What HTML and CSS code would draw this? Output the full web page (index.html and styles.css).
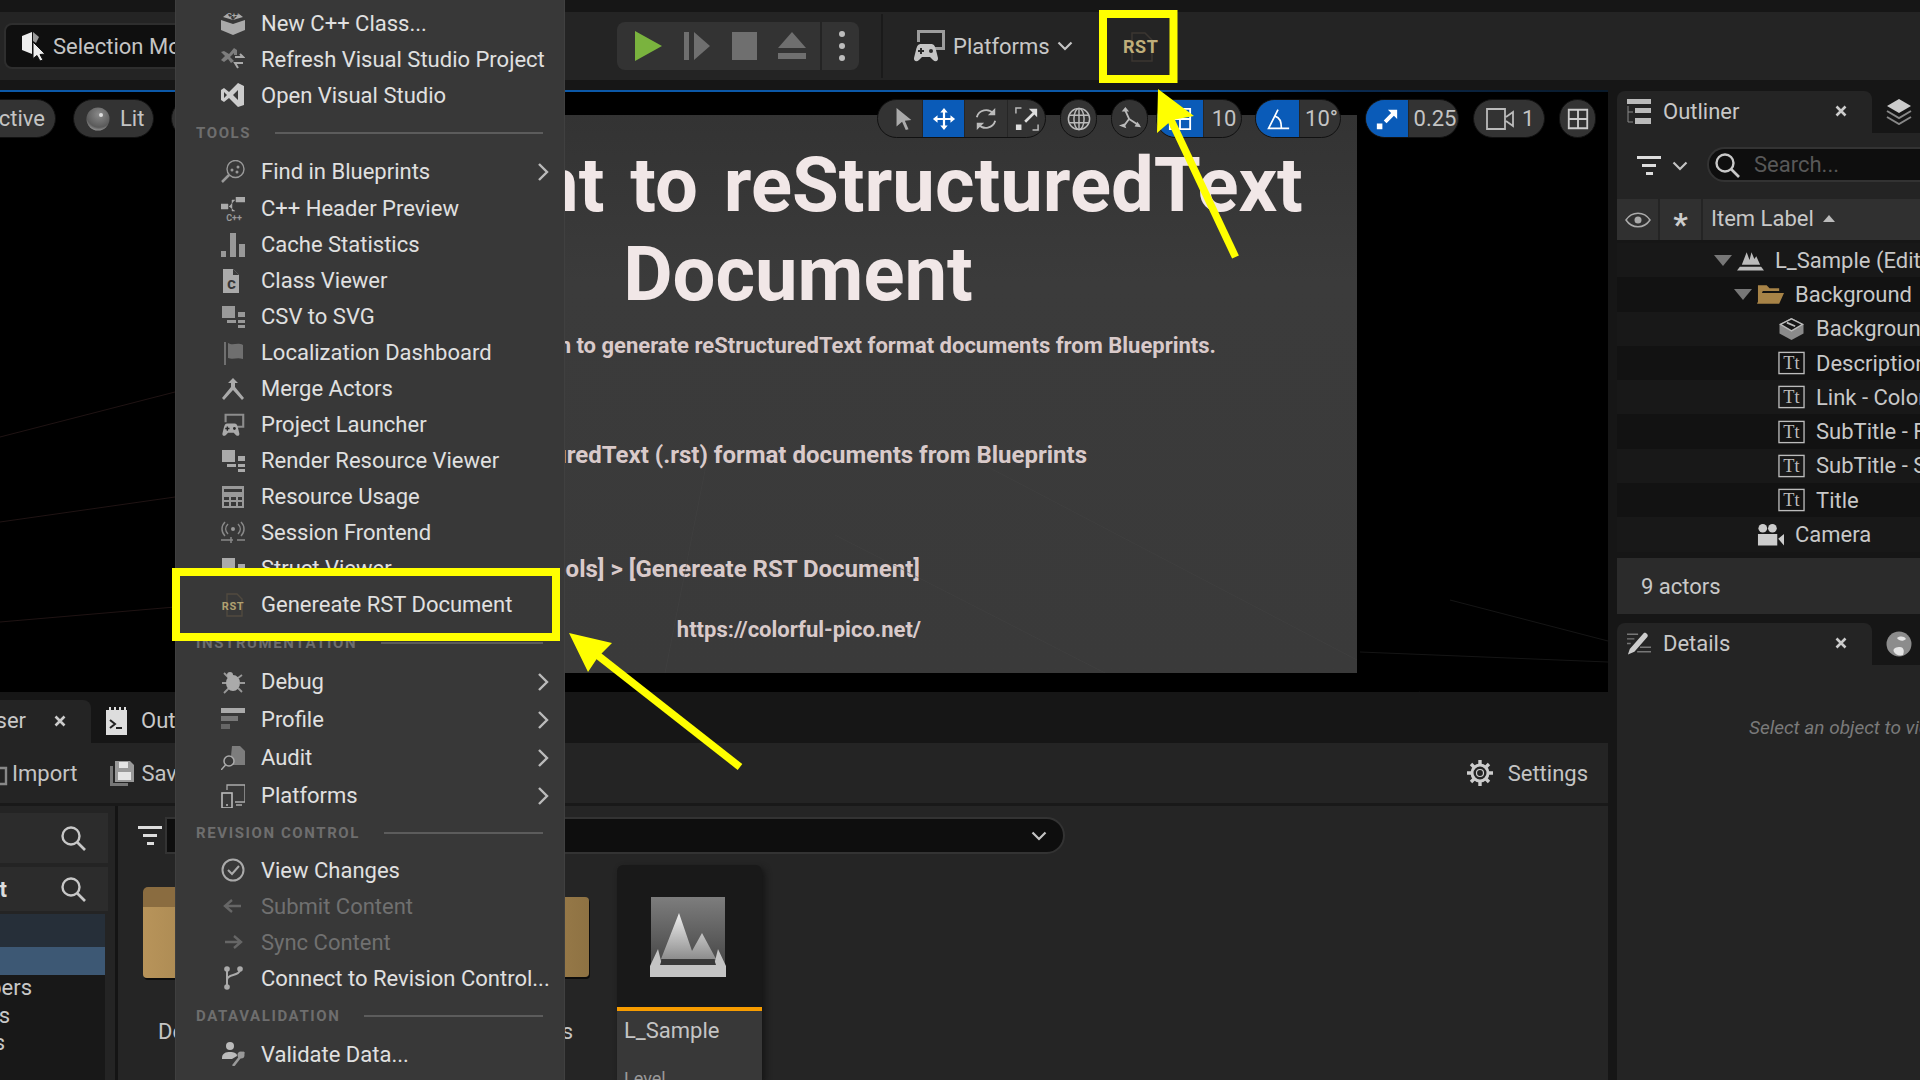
FILE: index.html
```html
<!DOCTYPE html>
<html lang="en">

<head>
    <meta charset="UTF-8">
    <title>Unreal Editor - Tools menu</title>
    <link rel="stylesheet" href="styles.css">
</head>

<body>

    <svg class="defs" width="0" height="0">
        <symbol id="i-search" viewBox="0 0 26 26"><circle cx="11" cy="11" r="8.5" fill="none" stroke="currentColor" stroke-width="2.4"/><path d="M17 17l8 8" stroke="currentColor" stroke-width="2.6"/></symbol>
        <symbol id="i-filter" viewBox="0 0 24 22"><path d="M0 1h24v3H0zM5 9h14v3H5zM9 17h7v3H9z" fill="currentColor"/></symbol>
        <symbol id="i-chev" viewBox="0 0 16 10"><path d="M1.5 1.5L8 8l6.5-6.5" fill="none" stroke="currentColor" stroke-width="2.2"/></symbol>
        <symbol id="i-close" viewBox="0 0 12 12"><path d="M1.5 1.5l9 9M10.500 1.5l-9 9" stroke="currentColor" stroke-width="2.6"/></symbol>
        <symbol id="i-right" viewBox="0 0 12 20"><path d="M2 2l8 8-8 8" fill="none" stroke="currentColor" stroke-width="2.4"/></symbol>
        <symbol id="i-squares" viewBox="0 0 24 24"><path d="M1 1h13v12H1zM17 7h7v5h-7zM17 15h7v3h-7zM17 20h7v3h-7zM6 15h9v3H6z" fill="currentColor"/></symbol>
        <symbol id="i-gamepad" viewBox="0 0 34 34"><path d="M5 1h28v20H15v-3h15V4H8v9H5z" fill="currentColor" opacity=".75"/><path d="M9 15h10c3 0 4 2 5 6l2 8c.5 3-2.500 4.500-5 2l-3-3H10l-3 3c-2.500 2.500-5.500 1-5-2l2-8c1-4 2-6 5-6z" fill="currentColor"/><path d="M6 21h6v2H6zM8 19h2v6H8z" fill="#2a2a2a"/><circle cx="19" cy="22" r="2" fill="#2a2a2a"/></symbol>
        <symbol id="i-tt" viewBox="0 0 28 24"><rect x="1" y="1" width="26" height="22" fill="none" stroke="currentColor" stroke-width="1.400"/><text x="14" y="18.500" font-family="Liberation Serif, serif" font-size="19" fill="currentColor" text-anchor="middle">Tt</text></symbol>
    </svg>

    <div class="page">

        <div class="top-strip"></div>

        <header class="toolbar">
            <div class="mode-pill">
                <svg class="mode-icon" viewBox="0 0 26 30"><path d="M12 1L2 5v14l10 4z" fill="#eee"/><path d="M13 1l6 5-3 6-3-2z" fill="#999"/><path d="M13 11l12 12-5 .5 3 5.500-3 1-3-5.500-4 3z" fill="#eee" stroke="#111"/></svg>
                <span>Selection Mode</span>
            </div>
            <div class="play-group">
                <svg class="play" viewBox="0 0 28 30"><path d="M1 0l27 15L1 30z" fill="#7ab33e"/></svg>
                <svg class="step" viewBox="0 0 26 28"><path d="M0 0h5v28H0zM10 0l16 14-16 14z" fill="#6f6f6f"/></svg>
                <div class="stop"></div>
                <svg class="eject" viewBox="0 0 28 28"><path d="M14 0l14 16H0zM0 21h28v6H0z" fill="#6f6f6f"/></svg>
                <div class="group-sep"></div>
                <div class="kebab"><i></i><i></i><i></i></div>
            </div>
            <div class="tool-sep"></div>
            <div class="platforms">
                <svg class="platforms-icon"><use href="#i-gamepad"/></svg>
                <span>Platforms</span>
                <svg class="chev"><use href="#i-chev"/></svg>
            </div>
            <div class="rst-box">
                <svg class="rst-doc" viewBox="0 0 22 30"><path d="M1 1h13l7 7v21H1z" fill="none" stroke="#3b3631" stroke-width="1.500"/></svg>
                <span>RST</span>
            </div>
        </header>

        <div class="top-band"></div>

        <div class="workspace">

            <div class="left-col">
                <div class="blue-line"></div>

                <section class="viewport">
                    <svg class="vp-lines" viewBox="0 0 1608 600">
                        <path d="M0 345L175 300M0 430L175 405M0 530L175 515" stroke="#1f1313" fill="none"/>
                        <path d="M1450 508L1608 549M1360 625L1420 600M1360 560L1608 570" stroke="#151515" fill="none"/>
                    </svg>

                    <div class="preview">
                        <div class="preview-title"><span class="wide">Blueprint to reStructuredText</span><br>Document</div>
                        <p class="preview-line one"><span>This is a plugin to generate reStructuredText format documents from Blueprints.</span></p>
                        <p class="preview-line two"><span>Generates reStructuredText (.rst) format documents from Blueprints</span></p>
                        <p class="preview-line three"><span>Run [Tools] &gt; [Genereate RST Document]</span></p>
                        <p class="preview-line four"><span>https://colorful-pico.net/</span></p>
                        <svg class="preview-lines" viewBox="0 0 792 558">
                            <path d="M100 558L145 330M400 340L792 545M270 420L540 558M140 558L0 610" stroke="#444" fill="none"/>
                        </svg>
                    </div>

                    <div class="vp-bar">
                        <div class="pill persp"><span>Perspective</span></div>
                        <div class="pill lit">
                            <svg class="lit-ball" viewBox="0 0 24 24"><defs><radialGradient id="ball" cx=".55" cy=".3" r=".8"><stop offset="0" stop-color="#8a8a8a"/><stop offset=".7" stop-color="#5a5a5a"/><stop offset="1" stop-color="#b5b5b5"/></radialGradient></defs><circle cx="12" cy="12" r="11.500" fill="url(#ball)"/><circle cx="15" cy="8" r="2" fill="#ddd"/></svg>
                            <span>Lit</span>
                        </div>
                        <div class="pill show"></div>

                        <div class="vp-right">
                            <div class="pill seg-pill transforms">
                                <div class="seg pick"><svg viewBox="0 0 24 26" class="seg-icon"><path d="M5 1l16 13-7 1 4 9-3 1-4-9-6 5z" fill="#aaa"/></svg></div>
                                <div class="seg on move"><svg viewBox="0 0 26 26" class="seg-icon"><path d="M13 1l4 5h-2.800v5.800H20V9l5 4-5 4v-2.800h-5.800V20H17l-4 5-4-5h2.800v-5.800H6V17l-5-4 5-4v2.800h5.800V6H9z" fill="#fff"/></svg></div>
                                <div class="seg turn"><svg viewBox="0 0 26 26" class="seg-icon"><path d="M3 11A10.500 10.500 0 0 1 21 7M23 15A10.500 10.500 0 0 1 5 19" fill="none" stroke="#bbb" stroke-width="2"/><path d="M23 1v8h-8zM3 25v-8h8z" fill="#bbb"/></svg></div>
                                <div class="seg size"><svg viewBox="0 0 26 26" class="seg-icon"><path d="M1 7V1h6M19 25h6v-6" fill="none" stroke="#bbb" stroke-width="1.600"/><path d="M1 19h6v6H1zM15 2h9v9l-3-3-9 9-2-2 9-9z" fill="#ddd"/></svg></div>
                            </div>
                            <div class="pill round world"><svg viewBox="0 0 26 26" class="seg-icon"><g fill="none" stroke="#bbb" stroke-width="1.600"><circle cx="13" cy="13" r="11.500"/><ellipse cx="13" cy="13" rx="5.500" ry="11.500"/><path d="M13 1.500v23M2 9h22M2 17h22"/></g></svg></div>
                            <div class="pill round surface"><svg viewBox="0 0 26 26" class="seg-icon"><path d="M8 4l4 9-6 8M12 13l11 7" fill="none" stroke="#bbb" stroke-width="2"/><path d="M8 0l4 5H4zM1 20l6-2 2 5zM25 22l-7-1 3-5z" fill="#bbb"/></svg></div>
                            <div class="pill seg-pill grid-snap">
                                <div class="seg on"><svg viewBox="0 0 26 26" class="seg-icon"><path d="M2 2h22v22H2zM13 2v22M2 13h22" fill="none" stroke="#fff" stroke-width="2"/></svg></div>
                                <div class="seg num">10</div>
                            </div>
                            <div class="pill seg-pill angle-snap">
                                <div class="seg on"><svg viewBox="0 0 28 26" class="seg-icon"><path d="M14 2L3 24h24M11 10c4 1 7 6 7 14" fill="none" stroke="#fff" stroke-width="2"/></svg></div>
                                <div class="seg num">10°</div>
                            </div>
                            <div class="pill seg-pill scale-snap">
                                <div class="seg on"><svg viewBox="0 0 26 26" class="seg-icon"><path d="M2 18h6v6H2zM14 3h10v10l-3.500-3.500-8 8-3-3 8-8z" fill="#fff"/></svg></div>
                                <div class="seg num">0.25</div>
                            </div>
                            <div class="pill camera"><svg viewBox="0 0 30 24" class="cam-icon"><path d="M2 2h18v20H2zM21 10l7-5v14l-7-5" fill="none" stroke="#bbb" stroke-width="1.800"/></svg><span>1</span></div>
                            <div class="pill round layout"><svg viewBox="0 0 26 26" class="seg-icon"><path d="M3 3h20v20H3zM13 3v20M3 13h20" fill="none" stroke="#ccc" stroke-width="2"/></svg></div>
                        </div>
                    </div>
                </section>

                <div class="dock-tabs">
                    <div class="dock-tab">
                        <span class="dock-name">Content Browser</span>
                        <svg class="close"><use href="#i-close"/></svg>
                    </div>
                    <div class="dock-tab-off">
                        <svg class="log-icon" viewBox="0 0 21 28"><path d="M0 3h3V0h2v3h3V0h2v3h3V0h2v3h3V0h2v3h1v25H0z" fill="#ddd"/><path d="M4 13l5 4-5 4M10 21h6" fill="none" stroke="#222" stroke-width="2"/></svg>
                        <span>Output Log</span>
                    </div>
                </div>

                <div class="browser-bar">
                    <svg class="import-icon" viewBox="0 0 8 26"><path d="M-8 8h14v16H-8" fill="none" stroke="#888" stroke-width="2.400"/></svg>
                    <span class="bar-text">Import</span>
                    <svg class="save-icon" viewBox="0 0 24 25"><path d="M0 5h3v17h15v3H0z" fill="#777"/><path d="M5 0h15l4 4v17H5z" fill="#999"/><path d="M9 1h9v6H9zM8 11h13v8H8z" fill="#e4e4e4"/></svg>
                    <span class="bar-text">Save All</span>
                    <div class="settings">
                        <svg class="gear" viewBox="0 0 26 26"><g fill="none" stroke="#ccc"><circle cx="13" cy="13" r="8" stroke-width="3"/><circle cx="13" cy="13" r="3.500" stroke-width="1.200"/><path d="M13 0v5M13 21v5M0 13h5M21 13h5M4 4l3.500 3.500M18.500 18.500L22 22M22 4l-3.500 3.500M7.500 18.500L4 22" stroke-width="3.400"/></g></svg>
                        <span class="bar-text">Settings</span>
                    </div>
                </div>

                <div class="browser-body">
                    <aside class="sources">
                        <div class="source-search first"><svg class="mag"><use href="#i-search"/></svg></div>
                        <div class="source-search second"><span>Content</span><svg class="mag"><use href="#i-search"/></svg></div>
                        <div class="src-row dim"></div>
                        <div class="src-row sel"></div>
                        <div class="src-name devs">Developers</div>
                        <div class="src-name maps">Maps</div>
                        <div class="src-name mats">Materials</div>
                    </aside>
                    <div class="assets">
                        <div class="path-row">
                            <svg class="asset-filter"><use href="#i-filter"/></svg>
                            <div class="path-field"><svg class="chev"><use href="#i-chev"/></svg></div>
                        </div>
                        <div class="asset-row">
                            <div class="folder first-folder"><div class="folder-tab"></div><div class="folder-body"></div><span>Developers</span></div>
                            <div class="folder second-folder"><div class="folder-body"></div><span>Maps</span></div>
                            <div class="level-card">
                                <div class="level-thumb">
                                    <svg viewBox="0 0 76 80" class="level-icon">
                                        <defs>
                                            <linearGradient id="sky" x1="0" y1="0" x2="0" y2="1"><stop offset="0" stop-color="#7d7d7d"/><stop offset="1" stop-color="#3d3d3d"/></linearGradient>
                                            <linearGradient id="hill" x1="0" y1="0" x2="0" y2="1"><stop offset="0" stop-color="#f0f0f0"/><stop offset="1" stop-color="#8d8d8d"/></linearGradient>
                                        </defs>
                                        <path d="M1 0h74v80H1z" fill="url(#sky)"/>
                                        <path d="M11 62L29 16 42 54l10-18 14 26z" fill="url(#hill)"/>
                                        <path d="M0 69l8-17 4 16h52l4-16 8 17v11H0z" fill="#c4c4c4"/>
                                        <path d="M12 62h52l2 6H10z" fill="#3a3a3a"/>
                                    </svg>
                                </div>
                                <div class="level-foot">
                                    <div class="level-name">L_Sample</div>
                                    <div class="level-type">Level</div>
                                </div>
                            </div>
                        </div>
                    </div>
                </div>
            </div>

            <aside class="right-col">
                <div class="panel-tabs">
                    <div class="panel-tab">
                        <svg class="tab-icon" viewBox="0 0 24 25"><path d="M0 0h24v5H0zM8 9h16v5H8zM8 19h16v6H8z" fill="#bbb"/><path d="M1 7v16h5M1 13h5" fill="none" stroke="#888"/></svg>
                        <span>Outliner</span>
                        <svg class="close"><use href="#i-close"/></svg>
                    </div>
                    <svg class="side-icon" viewBox="0 0 26 26"><path d="M13 0l12 7-12 7L1 7z" fill="#ccc"/><path d="M1 12l12 7 12-7M1 18l12 7 12-7" fill="none" stroke="#888" stroke-width="2"/></svg>
                </div>
                <div class="outliner-tools">
                    <svg class="out-filter"><use href="#i-filter"/></svg>
                    <svg class="chev"><use href="#i-chev"/></svg>
                    <div class="out-search">
                        <svg class="mag"><use href="#i-search"/></svg>
                        <span>Search...</span>
                    </div>
                </div>
                <div class="out-head">
                    <div class="head-cell eye"><svg viewBox="0 0 26 16" class="eye-icon"><path d="M1 8c6-9 18-9 24 0-6 9-18 9-24 0z" fill="none" stroke="#aaa" stroke-width="1.500"/><circle cx="13" cy="8" r="3.500" fill="#aaa"/></svg></div>
                    <div class="head-cell star">*</div>
                    <div class="head-cell label"><span>Item Label</span><i class="sort-up"></i></div>
                </div>
                <div class="out-rows">
                    <div class="out-row lvl0"><i class="tri"></i><svg class="row-icon" viewBox="0 0 28 22"><path d="M0 22l3-4h22l3 4zM5 16L10 3l3 8 2-8 3 7 2-3 4 9z" fill="#bbb"/></svg><span>L_Sample (Editor)</span></div>
                    <div class="out-row lvl1"><i class="tri"></i><svg class="row-icon" viewBox="0 0 28 22"><path d="M1 20V2h9l3 3h10v3H6zM5 10h23l-5 11H0z" fill="#a78347"/></svg><span>Background</span></div>
                    <div class="out-row lvl2"><svg class="row-icon" viewBox="0 0 28 26"><path d="M14 1l13 7v10L14 25 1 18V8z" fill="#8a8a8a"/><path d="M14 2l12 6-12 7L2 8z" fill="#161616" stroke="#bbb" stroke-width="1.500"/><path d="M9 6l9 4" stroke="#bbb" stroke-width="2"/></svg><span>Background</span></div>
                    <div class="out-row lvl2"><svg class="row-icon tt"><use href="#i-tt"/></svg><span>Description</span></div>
                    <div class="out-row lvl2"><svg class="row-icon tt"><use href="#i-tt"/></svg><span>Link - Colorful</span></div>
                    <div class="out-row lvl2"><svg class="row-icon tt"><use href="#i-tt"/></svg><span>SubTitle - Feature</span></div>
                    <div class="out-row lvl2"><svg class="row-icon tt"><use href="#i-tt"/></svg><span>SubTitle - Summary</span></div>
                    <div class="out-row lvl2"><svg class="row-icon tt"><use href="#i-tt"/></svg><span>Title</span></div>
                    <div class="out-row lvl1 leaf"><svg class="row-icon" viewBox="0 0 28 24"><circle cx="6" cy="5" r="4.500" fill="#ccc"/><circle cx="16" cy="5" r="4.500" fill="#ccc"/><path d="M1 11h20v12H1zM22 16l6-5v12z" fill="#ccc"/></svg><span>Camera</span></div>
                </div>
                <div class="actors-bar"><span>9 actors</span></div>
                <div class="panel-tabs details-tabs">
                    <div class="panel-tab">
                        <svg class="tab-icon" viewBox="0 0 26 26"><path d="M3 19L18 2c2-2 6 2 4 4L8 22l-7 3z" fill="#ccc"/><path d="M0 3h12M0 8h8M0 13h4M14 17h12M11 22h15" stroke="#777" stroke-width="1.500"/></svg>
                        <span>Details</span>
                        <svg class="close"><use href="#i-close"/></svg>
                    </div>
                    <svg class="side-icon" viewBox="0 0 26 26"><circle cx="13" cy="13" r="12.500" fill="#8c8c8c"/><path d="M8 21c-2-4 3-5 6-5 3 0 5 3 3 8-4 1-7 0-9-3zM11 7c3-2 7-2 9 1-3 3-7 2-9-1z" fill="#e4e4e4"/></svg>
                </div>
                <div class="details-body">
                    <span>Select an object to view details.</span>
                </div>
            </aside>
        </div>

        <nav class="tools-menu">
            <div class="menu-row"><svg class="menu-icon" viewBox="0 0 24 24"><path d="M0 9l12 4 12-4v10l-12 5L0 19zM2 6l4-3 6 6zM22 6l-4-3-6 6z" fill="#aaa"/><text x="12.500" y="6.500" font-family="Roboto" font-size="8" font-weight="700" fill="#aaa" text-anchor="middle">C++</text></svg><span>New C++ Class...</span></div>
            <div class="menu-row"><svg class="menu-icon" viewBox="0 0 24 24"><path d="M0 5l3-1 5 3 5-6 3 2v5h-3V6L9 10l4 4-3 2-3-4-4 3-3-2 4-4z" fill="#7d7d7d"/><path d="M14 10h8l-3-3M22 16h-8l3 5" fill="none" stroke="#aaa" stroke-width="2"/></svg><span>Refresh Visual Studio Project</span></div>
            <div class="menu-row"><svg class="menu-icon" viewBox="0 0 24 24"><path d="M17 0l6 3v19l-6 2-9-9-5 4-3-2V7l3-2 5 4zM17 7l-5 5 5 5zM3 9v6l3-3z" fill="#ccc"/></svg><span>Open Visual Studio</span></div>

            <div class="menu-section"><span>TOOLS</span><i></i></div>
            <div class="menu-row sub first-sub"><svg class="menu-icon" viewBox="0 0 24 24"><circle cx="14.500" cy="9" r="8.500" fill="none" stroke="#999" stroke-width="1.400"/><path d="M8 15l-7 7" stroke="#999" stroke-width="2.500"/><circle cx="11" cy="10" r="1.500" fill="#999"/><circle cx="17" cy="7" r="1.500" fill="#999"/><circle cx="16" cy="12" r="1.500" fill="#999"/></svg><span>Find in Blueprints</span><svg class="menu-more"><use href="#i-right"/></svg></div>
            <div class="menu-row"><svg class="menu-icon" viewBox="0 0 24 24"><path d="M0 7h7v5H0zM15 0h9v5h-9zM8 9.500h3V3h3M8 9.500h3V14h3" fill="#aaa" stroke="#aaa" stroke-width=".5"/><text x="13" y="24" font-family="Roboto" font-size="9" font-weight="700" fill="#999" text-anchor="middle">C++</text></svg><span>C++ Header Preview</span></div>
            <div class="menu-row"><svg class="menu-icon" viewBox="0 0 24 24"><path d="M0 18h5v6H0zM9 0h6v24H9zM18 11h6v13h-6z" fill="#999"/></svg><span>Cache Statistics</span></div>
            <div class="menu-row"><svg class="menu-icon" viewBox="0 0 24 24"><path d="M4 0h8l6 6v18H2V0z" fill="#aaa"/><path d="M12 0v6h6" fill="#383838"/><text x="10.500" y="20" font-family="Roboto" font-size="13" font-weight="900" fill="#383838" text-anchor="middle">C</text></svg><span>Class Viewer</span></div>
            <div class="menu-row"><svg class="menu-icon"><use href="#i-squares" color="#999"/></svg><span>CSV to SVG</span></div>
            <div class="menu-row"><svg class="menu-icon" viewBox="0 0 24 24"><path d="M3 1h2v23H3zM7 2c5 3 9-1 15 2v14c-6-2-10 1-15-1z" fill="#6f6f6f"/></svg><span>Localization Dashboard</span></div>
            <div class="menu-row"><svg class="menu-icon" viewBox="0 0 24 24"><path d="M12 1l5 5h-3v4l9 11-2 2-9-10-9 10-2-2 9-11V6H7z" fill="#aaa"/></svg><span>Merge Actors</span></div>
            <div class="menu-row"><svg class="menu-icon"><use href="#i-gamepad" color="#aaa"/></svg><span>Project Launcher</span></div>
            <div class="menu-row"><svg class="menu-icon"><use href="#i-squares" color="#aaa"/></svg><span>Render Resource Viewer</span></div>
            <div class="menu-row"><svg class="menu-icon" viewBox="0 0 24 24"><path d="M1 1h22v22H1z" fill="#999"/><path d="M3 7h18M3 12h5v3H3zM10 12h5v3h-5zM17 12h4v3h-4zM3 17h5v4H3zM10 17h5v4h-5zM17 17h4v4h-4zM3 4h18v3H3z" fill="#383838"/></svg><span>Resource Usage</span></div>
            <div class="menu-row"><svg class="menu-icon" viewBox="0 0 24 24"><circle cx="12" cy="8" r="2" fill="#999"/><path d="M7 3c-3 3-3 7 0 10M17 3c3 3 3 7 0 10M4 1c-4 4-4 10 0 14M20 1c4 4 4 10 0 14M0 19h12M16 19h8M10 16v6" fill="none" stroke="#888" stroke-width="1.500"/></svg><span>Session Frontend</span></div>
            <div class="menu-row"><svg class="menu-icon"><use href="#i-squares" color="#aaa"/></svg><span>Struct Viewer</span></div>
            <div class="menu-row marked"><svg class="menu-icon" viewBox="0 0 24 24"><path d="M6 1h10l5 5v17H6z" fill="none" stroke="#514a3f" stroke-width="1.400"/><text x="12" y="17" font-family="Roboto" font-size="11" font-weight="700" letter-spacing=".6" fill="#b0a070" text-anchor="middle">RST</text></svg><span>Genereate RST Document</span></div>

            <div class="menu-section"><span>INSTRUMENTATION</span><i></i></div>
            <div class="menu-row sub"><svg class="menu-icon" viewBox="0 0 24 24"><path d="M3 3l5 5M21 5l-4 3M1 13h5M19 13h5M3 23l5-5M21 22l-4-4" stroke="#999" stroke-width="1.800"/><ellipse cx="12" cy="13" rx="7" ry="8" fill="#aaa"/><circle cx="9" cy="5" r="3" fill="#aaa"/></svg><span>Debug</span><svg class="menu-more"><use href="#i-right"/></svg></div>
            <div class="menu-row sub"><svg class="menu-icon" viewBox="0 0 24 24"><path d="M0 0h24v5H0z" fill="#aaa"/><path d="M0 8h17v5H0z" fill="#777"/><path d="M0 16h9v5H0z" fill="#666"/></svg><span>Profile</span><svg class="menu-more"><use href="#i-right"/></svg></div>
            <div class="menu-row sub"><svg class="menu-icon" viewBox="0 0 24 24"><path d="M11 0h8l5 5v14H12l-2-9z" fill="#7d7d7d"/><circle cx="8" cy="15" r="5" fill="#383838" stroke="#aaa" stroke-width="1.500"/><path d="M4.500 19L0 24" stroke="#aaa" stroke-width="1.500"/></svg><span>Audit</span><svg class="menu-more"><use href="#i-right"/></svg></div>
            <div class="menu-row sub"><svg class="menu-icon" viewBox="0 0 24 24"><path d="M6 6V1h18v17H14M15 21h6" fill="none" stroke="#aaa" stroke-width="1.300"/><rect x="1" y="9" width="10" height="15" fill="none" stroke="#bbb" stroke-width="1.600"/><circle cx="6" cy="21" r="1" fill="#bbb"/></svg><span>Platforms</span><svg class="menu-more"><use href="#i-right"/></svg></div>

            <div class="menu-section short"><span>REVISION CONTROL</span><i></i></div>
            <div class="menu-row"><svg class="menu-icon" viewBox="0 0 24 24"><circle cx="12" cy="12" r="10.500" fill="none" stroke="#aaa" stroke-width="2"/><path d="M7 12l4 4 7-8" fill="none" stroke="#aaa" stroke-width="2"/></svg><span>View Changes</span></div>
            <div class="menu-row off"><svg class="menu-icon" viewBox="0 0 24 24"><path d="M20 12H5M11 6l-7 6 7 6" fill="none" stroke="#666" stroke-width="2.400"/></svg><span>Submit Content</span></div>
            <div class="menu-row off"><svg class="menu-icon" viewBox="0 0 24 24"><path d="M4 12h15M13 6l7 6-7 6" fill="none" stroke="#666" stroke-width="2.400"/></svg><span>Sync Content</span></div>
            <div class="menu-row"><svg class="menu-icon" viewBox="0 0 24 24"><circle cx="6" cy="3" r="2.800" fill="#aaa"/><circle cx="19" cy="3" r="2.800" fill="#aaa"/><circle cx="6" cy="21" r="2.800" fill="#aaa"/><path d="M6 3v18M19 3c0 8-13 4-13 11" fill="none" stroke="#aaa" stroke-width="2"/></svg><span>Connect to Revision Control...</span></div>

            <div class="menu-section"><span>DATAVALIDATION</span><i></i></div>
            <div class="menu-row"><svg class="menu-icon" viewBox="0 0 24 24"><circle cx="9" cy="4" r="4" fill="#bbb"/><path d="M1 16c0-5 4-6 8-6s7 1 7 4l-5 3H1z" fill="#bbb"/><path d="M23 10l-11 14" stroke="#999" stroke-width="2.600"/><circle cx="20" cy="13" r="3.500" fill="#999"/></svg><span>Validate Data...</span></div>
        </nav>

        <svg class="marks" viewBox="0 0 1920 1080">
            <rect x="1103" y="14" width="70.500" height="65" fill="none" stroke="#ffff00" stroke-width="8"/>
            <path d="M1158 89L1194 116 1172 120 1157 133z" fill="#ffff00"/>
            <path d="M1170 118L1235.500 257" stroke="#ffff00" stroke-width="7.500"/>
            <path d="M569 633L612 643 598 657 588 672z" fill="#ffff00"/>
            <path d="M596 654L740 767" stroke="#ffff00" stroke-width="7.500"/>
        </svg>
    </div>

</body>

</html>
```

FILE: styles.css
```css
* {
    box-sizing: border-box;
}

html,
body {
    margin: 0;
    height: 100%;
    background-color: #161616;
}

body {
    font-family: Roboto, sans-serif;
    font-size: 22px;
    color: #c8c8c8;
}

.defs {
    position: absolute;
}

svg {
    display: block;
    flex: none;
}

.page {
    position: relative;
    width: 1920px;
    height: 1080px;
    overflow: hidden;
    background-color: #161616;
}

.top-strip {
    height: 12px;
}

/* main toolbar */
.toolbar {
    height: 68px;
    background-color: #242424;
    display: flex;
    align-items: center;
}

.mode-pill {
    width: 300px;
    height: 46px;
    margin-left: 4px;
    padding-left: 14px;
    display: flex;
    align-items: center;
    gap: 7px;
    background-color: #0f0f0f;
    border: 2px solid #2e2e2e;
    border-radius: 8px;
    color: #c4c4c4;
    white-space: nowrap;
}

.mode-icon {
    width: 26px;
    height: 30px;
}

.play-group {
    width: 242px;
    height: 48px;
    margin-left: 313px;
    display: flex;
    align-items: center;
    background-color: #333;
    border-radius: 8px;
}

.play {
    width: 28px;
    height: 30px;
    margin-left: 17px;
}

.step {
    width: 26px;
    height: 28px;
    margin-left: 22px;
}

.stop {
    width: 25px;
    height: 28px;
    margin-left: 22px;
    background-color: #6f6f6f;
}

.eject {
    width: 28px;
    height: 28px;
    margin-left: 21px;
}

.group-sep {
    width: 2px;
    height: 48px;
    margin-left: 14px;
    background-color: #242424;
}

.kebab {
    margin-left: 17px;
    display: flex;
    flex-direction: column;
    gap: 6px;
}

.kebab i {
    display: block;
    width: 6px;
    height: 6px;
    border-radius: 50%;
    background-color: #bdbdbd;
}

.tool-sep {
    width: 2px;
    height: 64px;
    margin-left: 22px;
    background-color: #1a1a1a;
}

.platforms {
    margin-left: 29px;
    display: flex;
    align-items: center;
}

.platforms-icon {
    width: 34px;
    height: 34px;
    color: #c4c4c4;
    margin-right: 7px;
}

.chev {
    width: 16px;
    height: 10px;
    margin-left: 7px;
    color: #c4c4c4;
}

.rst-box {
    position: relative;
    width: 78px;
    height: 46px;
    margin-left: 29px;
    display: flex;
    align-items: center;
    justify-content: center;
    font-size: 18px;
    font-weight: 700;
    letter-spacing: .5px;
    color: #bfae7a;
}

.rst-doc {
    position: absolute;
    left: 29px;
    top: 9px;
    width: 22px;
    height: 30px;
}

.rst-box span {
    position: relative;
}

.top-band {
    height: 10px;
}

/* body under the toolbar */
.workspace {
    display: flex;
    height: 990px;
}

.left-col {
    width: 1608px;
    display: flex;
    flex-direction: column;
}

.blue-line {
    height: 2px;
    background: linear-gradient(to right, #0b58a8 0, #0b58a8 1150px, #0a2a50 1350px, #0a1a2a 1608px);
}

.viewport {
    position: relative;
    height: 600px;
    padding-top: 23px;
    background-color: #000;
}

.vp-lines {
    position: absolute;
    left: 0;
    top: 0;
    width: 1608px;
    height: 600px;
}

.preview {
    position: relative;
    width: 792px;
    height: 558px;
    margin-left: 565px;
    background: linear-gradient(to bottom, #333, #3b3b3b 30%, #3a3a3a);
    overflow: hidden;
    font-weight: 700;
    color: #d9caca;
}

.preview-lines {
    position: absolute;
    left: 0;
    top: 0;
    width: 792px;
    height: 558px;
    opacity: .45;
}

.preview-title {
    width: 1118px;
    margin-left: -326px;
    padding-top: 26px;
    font-size: 76px;
    line-height: 89px;
    text-align: center;
    white-space: nowrap;
    color: #f1e7e7;
}

.preview-title .wide {
    word-spacing: 7px;
}

/* lines run in under the menu, so they are pinned by their right end */
.preview-line {
    margin: 0;
    display: flex;
    justify-content: flex-end;
    white-space: nowrap;
    line-height: 24px;
}

.preview-line.one {
    margin-top: 15px;
    padding-right: 141px;
}

.preview-line.two {
    margin-top: 85px;
    padding-right: 270px;
    font-size: 24px;
}

.preview-line.three {
    margin-top: 90px;
    padding-right: 437px;
    font-size: 24px;
}

.preview-line.four {
    margin-top: 37px;
    padding-right: 436px;
}

.vp-bar {
    position: absolute;
    left: 0;
    right: 0;
    top: 7px;
    height: 39px;
    padding-right: 12px;
    display: flex;
    gap: 17px;
}

.vp-right {
    margin-left: auto;
    display: flex;
}

.pill {
    height: 39px;
    display: flex;
    align-items: center;
    background-color: #333;
    border: 1px solid #111;
    border-radius: 20px;
    color: #c4c4c4;
    overflow: hidden;
    white-space: nowrap;
}

.persp {
    width: 116px;
    margin-left: -60px;
    justify-content: flex-end;
    padding-right: 10px;
}

.lit {
    width: 81px;
    padding-left: 12px;
    gap: 10px;
}

.lit-ball {
    width: 24px;
    height: 24px;
}

.show {
    width: 100px;
}

.seg {
    height: 100%;
    display: flex;
    align-items: center;
    justify-content: center;
    border-left: 1px solid #262626;
}

.seg:first-child {
    border-left: 0;
}

.seg.on {
    background-color: #0a5bb8;
}

.seg-icon {
    width: 24px;
    height: 24px;
}

.transforms {
    width: 169px;
    margin-right: 14px;
}

.seg.pick {
    width: 44px;
    padding-left: 6px;
}

.seg.move {
    width: 42px;
}

.seg.turn {
    width: 43px;
}

.seg.size {
    flex: 1;
}

.round {
    width: 37px;
    justify-content: center;
}

.world {
    margin-right: 14px;
}

.surface {
    margin-right: 8px;
}

.grid-snap {
    width: 86px;
    margin-right: 13px;
}

.grid-snap .seg.on {
    width: 46px;
}

.seg.num {
    flex: 1;
    padding-left: 3px;
}

.angle-snap {
    width: 86px;
    margin-right: 24px;
}

.angle-snap .seg.on {
    width: 43px;
}

.scale-snap {
    width: 94px;
    margin-right: 14px;
}

.scale-snap .seg.on {
    width: 42px;
}

.camera {
    width: 72px;
    padding-left: 11px;
    gap: 7px;
    margin-right: 14px;
}

.cam-icon {
    width: 30px;
    height: 24px;
}

/* content browser */
.dock-tabs {
    height: 51px;
    padding-top: 8px;
    display: flex;
}

.dock-tab {
    width: 91px;
    padding-bottom: 2px;
    background-color: #242424;
    border-radius: 0 8px 0 0;
    display: flex;
    align-items: center;
    justify-content: flex-end;
    padding-right: 25px;
    overflow: hidden;
    white-space: nowrap;
}

.dock-name {
    margin-right: 28px;
}

.close {
    width: 12px;
    height: 12px;
    color: #ccc;
}

.dock-tab-off {
    margin-left: 15px;
    padding-bottom: 2px;
    display: flex;
    align-items: center;
    gap: 14px;
    white-space: nowrap;
}

.log-icon {
    width: 21px;
    height: 28px;
}

.browser-bar {
    height: 63px;
    display: flex;
    align-items: center;
    background-color: #242424;
    border-bottom: 3px solid #191919;
    white-space: nowrap;
}

.import-icon {
    width: 8px;
    height: 26px;
    margin-right: 4px;
}

.bar-text {
    color: #c4c4c4;
}

.save-icon {
    width: 24px;
    height: 25px;
    margin: 0 7px 0 33px;
}

.settings {
    margin-left: auto;
    margin-right: 20px;
    display: flex;
    align-items: center;
    gap: 15px;
}

.gear {
    width: 26px;
    height: 26px;
}

.browser-body {
    flex: 1;
    display: flex;
    min-height: 0;
}

.sources {
    width: 118px;
    padding: 7px 7px 0 0;
    border-right: 3px solid #141414;
    background-color: #242424;
}

.source-search {
    position: relative;
    width: 108px;
    background-color: #2c2c2c;
    display: flex;
    align-items: center;
    justify-content: flex-end;
    padding-right: 22px;
}

.source-search.first {
    height: 50px;
}

.source-search.second {
    height: 44px;
    margin-top: 4px;
}

.source-search span {
    position: absolute;
    right: 101px;
    font-weight: 700;
    color: #ddd;
}

.mag {
    width: 26px;
    height: 26px;
    color: #c8c8c8;
}

.src-row {
    width: 105px;
    margin-top: 0;
}

.src-row.dim {
    height: 33px;
    margin-top: 3px;
    background-color: #262f39;
}

.src-row.sel {
    height: 28px;
    background-color: #3d5874;
}

.src-name {
    width: 105px;
    height: 27.500px;
    line-height: 26px;
    background-color: #181818;
    white-space: nowrap;
    display: flex;
    justify-content: flex-end;
}

.src-name.devs {
    padding-right: 73px;
}

.src-name.maps {
    padding-right: 95px;
}

.src-name.mats {
    height: 120px;
    padding-right: 100px;
}

.assets {
    flex: 1;
    min-width: 0;
    background-color: #252525;
}

.path-row {
    height: 48px;
    padding-top: 11px;
    display: flex;
}

.asset-filter {
    width: 24px;
    height: 22px;
    margin: 8px 0 0 20px;
    color: #ddd;
}

.path-field {
    width: 900px;
    height: 37px;
    margin-left: 3px;
    padding-right: 16px;
    display: flex;
    align-items: center;
    justify-content: flex-end;
    background-color: #0e0e0e;
    border: 2px solid #333;
    border-radius: 0 19px 19px 0;
}

.asset-row {
    position: relative;
    display: flex;
}

.folder {
    position: relative;
    width: 145px;
    color: #c4c4c4;
}

.first-folder {
    margin-left: 25px;
    padding-top: 33px;
}

.second-folder {
    margin-left: 156px;
    padding-top: 43px;
}

.folder-tab {
    position: absolute;
    left: 0;
    top: 33px;
    width: 60px;
    height: 20px;
    background-color: #8a6c40;
    border-radius: 5px 5px 0 0;
}

.folder-body {
    height: 80px;
    margin-bottom: 44px;
    background: linear-gradient(to right, #b8945a, #8e7243);
    border-radius: 4px;
    box-shadow: 1px 2px 0 #0c0c0c;
}

.first-folder .folder-body {
    height: 72px;
    margin-top: 19px;
    border-radius: 0 0 4px 4px;
}

.folder span {
    position: absolute;
    top: 165px;
    left: 15px;
    white-space: nowrap;
}

.second-folder span {
    left: auto;
    right: 16px;
}

.level-card {
    width: 145px;
    height: 216px;
    margin-left: 28px;
    margin-top: 11px;
    box-shadow: 3px 3px 6px #151515;
    border-radius: 6px 6px 0 0;
    overflow: hidden;
}

.level-thumb {
    height: 146px;
    padding: 32px 0 0 33px;
    background-color: #191919;
    border-bottom: 4px solid #f79c00;
}

.level-icon {
    width: 76px;
    height: 80px;
}

.level-foot {
    height: 70px;
    padding: 7px 7px;
    background-color: #383838;
    color: #c4c4c4;
}

.level-type {
    margin-top: 25px;
    font-size: 18px;
    color: #999;
}

/* outliner + details */
.right-col {
    width: 303px;
    margin-left: 9px;
    padding-top: 1px;
    display: flex;
    flex-direction: column;
    white-space: nowrap;
}

.panel-tabs {
    height: 42px;
    display: flex;
    align-items: center;
}

.panel-tab {
    width: 255px;
    height: 100%;
    padding: 0 0 2px 10px;
    display: flex;
    align-items: center;
    background-color: #242424;
    border-radius: 8px 8px 0 0;
}

.tab-icon {
    width: 24px;
    height: 25px;
    margin-right: 12px;
}

.panel-tab .close {
    margin-left: auto;
    margin-right: 25px;
}

.side-icon {
    width: 26px;
    height: 26px;
    margin-left: 14px;
}

.outliner-tools {
    height: 66px;
    padding: 14px 0 0 20px;
    display: flex;
    background-color: #242424;
}

.out-filter {
    width: 24px;
    height: 22px;
    margin-top: 8px;
    color: #ddd;
}

.outliner-tools .chev {
    margin: 14px 0 0 11px;
}

.out-search {
    flex: 1;
    height: 35px;
    margin-left: 19px;
    padding-left: 5px;
    display: flex;
    align-items: center;
    gap: 14px;
    background-color: #0e0e0e;
    border: 2px solid #333;
    border-right: 0;
    border-radius: 18px 0 0 18px;
    color: #585858;
}

.out-head {
    height: 41px;
    display: flex;
    background-color: #303030;
}

.head-cell {
    display: flex;
    align-items: center;
    justify-content: center;
    border-left: 2px solid #242424;
}

.head-cell.eye {
    width: 41px;
    border-left: 0;
}

.eye-icon {
    width: 26px;
    height: 16px;
}

.head-cell.star {
    width: 43px;
    font-size: 32px;
    font-weight: 700;
    line-height: 1;
    padding-top: 8px;
    color: #ccc;
}

.head-cell.label {
    flex: 1;
    justify-content: flex-start;
    padding: 0 0 2px 8px;
    gap: 9px;
}

.sort-up {
    width: 0;
    height: 0;
    border-left: 6px solid transparent;
    border-right: 6px solid transparent;
    border-bottom: 7px solid #bbb;
}

.out-rows {
    height: 318px;
    padding-top: 3px;
}

.out-row {
    height: 34.300px;
    display: flex;
    align-items: center;
    background-color: #181818;
    overflow: hidden;
}

.out-row:nth-child(even) {
    background-color: #121212;
}

.tri {
    width: 0;
    height: 0;
    border-left: 9px solid transparent;
    border-right: 9px solid transparent;
    border-top: 11px solid #777;
    margin-right: 5px;
}

.row-icon {
    width: 27px;
    height: 24px;
    margin-right: 11px;
    color: #bbb;
}

.lvl0 {
    padding-left: 97px;
}

.lvl1 {
    padding-left: 117px;
}

.lvl1.leaf {
    padding-left: 140px;
}

.lvl2 {
    padding-left: 161px;
}

.actors-bar {
    height: 56px;
    padding-left: 24px;
    display: flex;
    align-items: center;
    background-color: #2b2b2b;
}

.details-tabs {
    margin-top: 9px;
}

.details-body {
    flex: 1;
    padding: 51px 0 0 132px;
    background-color: #242424;
    color: #7a7a7a;
    font-style: italic;
    font-size: 19px;
    overflow: hidden;
}

/* tools dropdown, sits over everything */
.tools-menu {
    position: absolute;
    left: 175px;
    top: 0;
    width: 390px;
    height: 1080px;
    padding-top: 5px;
    background-color: #383838;
    border-left: 1px solid #3f3f3f;
    border-right: 1px solid #404040;
}

.menu-row {
    height: 36px;
    display: flex;
    align-items: center;
    padding-left: 45px;
    color: #e0e0e0;
    white-space: nowrap;
}

.menu-row.sub {
    height: 38px;
}

.menu-row.first-sub {
    height: 37.500px;
}

.menu-row.off {
    color: #707070;
}

.menu-icon {
    width: 24px;
    height: 24px;
    margin-right: 16px;
}

.menu-more {
    width: 12px;
    height: 20px;
    margin-left: auto;
    margin-right: 15px;
    color: #bbb;
}

.menu-section {
    height: 40px;
    display: flex;
    align-items: center;
    padding-left: 20px;
    padding-right: 21px;
    font-size: 15px;
    font-weight: 700;
    letter-spacing: 1.600px;
    color: #6e6e6e;
}

.menu-section.short {
    height: 37.500px;
}

.menu-section i {
    flex: 1;
    height: 2px;
    margin-left: 24px;
    background-color: #5c5c5c;
}

.menu-row.marked {
    position: relative;
    z-index: 1;
}

.menu-row.marked::before {
    content: "";
    position: absolute;
    left: -4px;
    right: 4px;
    top: -19px;
    bottom: -18px;
    z-index: -1;
    background-color: #383838;
    border: 8px solid #ffff00;
}

.marks {
    position: absolute;
    left: 0;
    top: 0;
    width: 1920px;
    height: 1080px;
    pointer-events: none;
}
```
